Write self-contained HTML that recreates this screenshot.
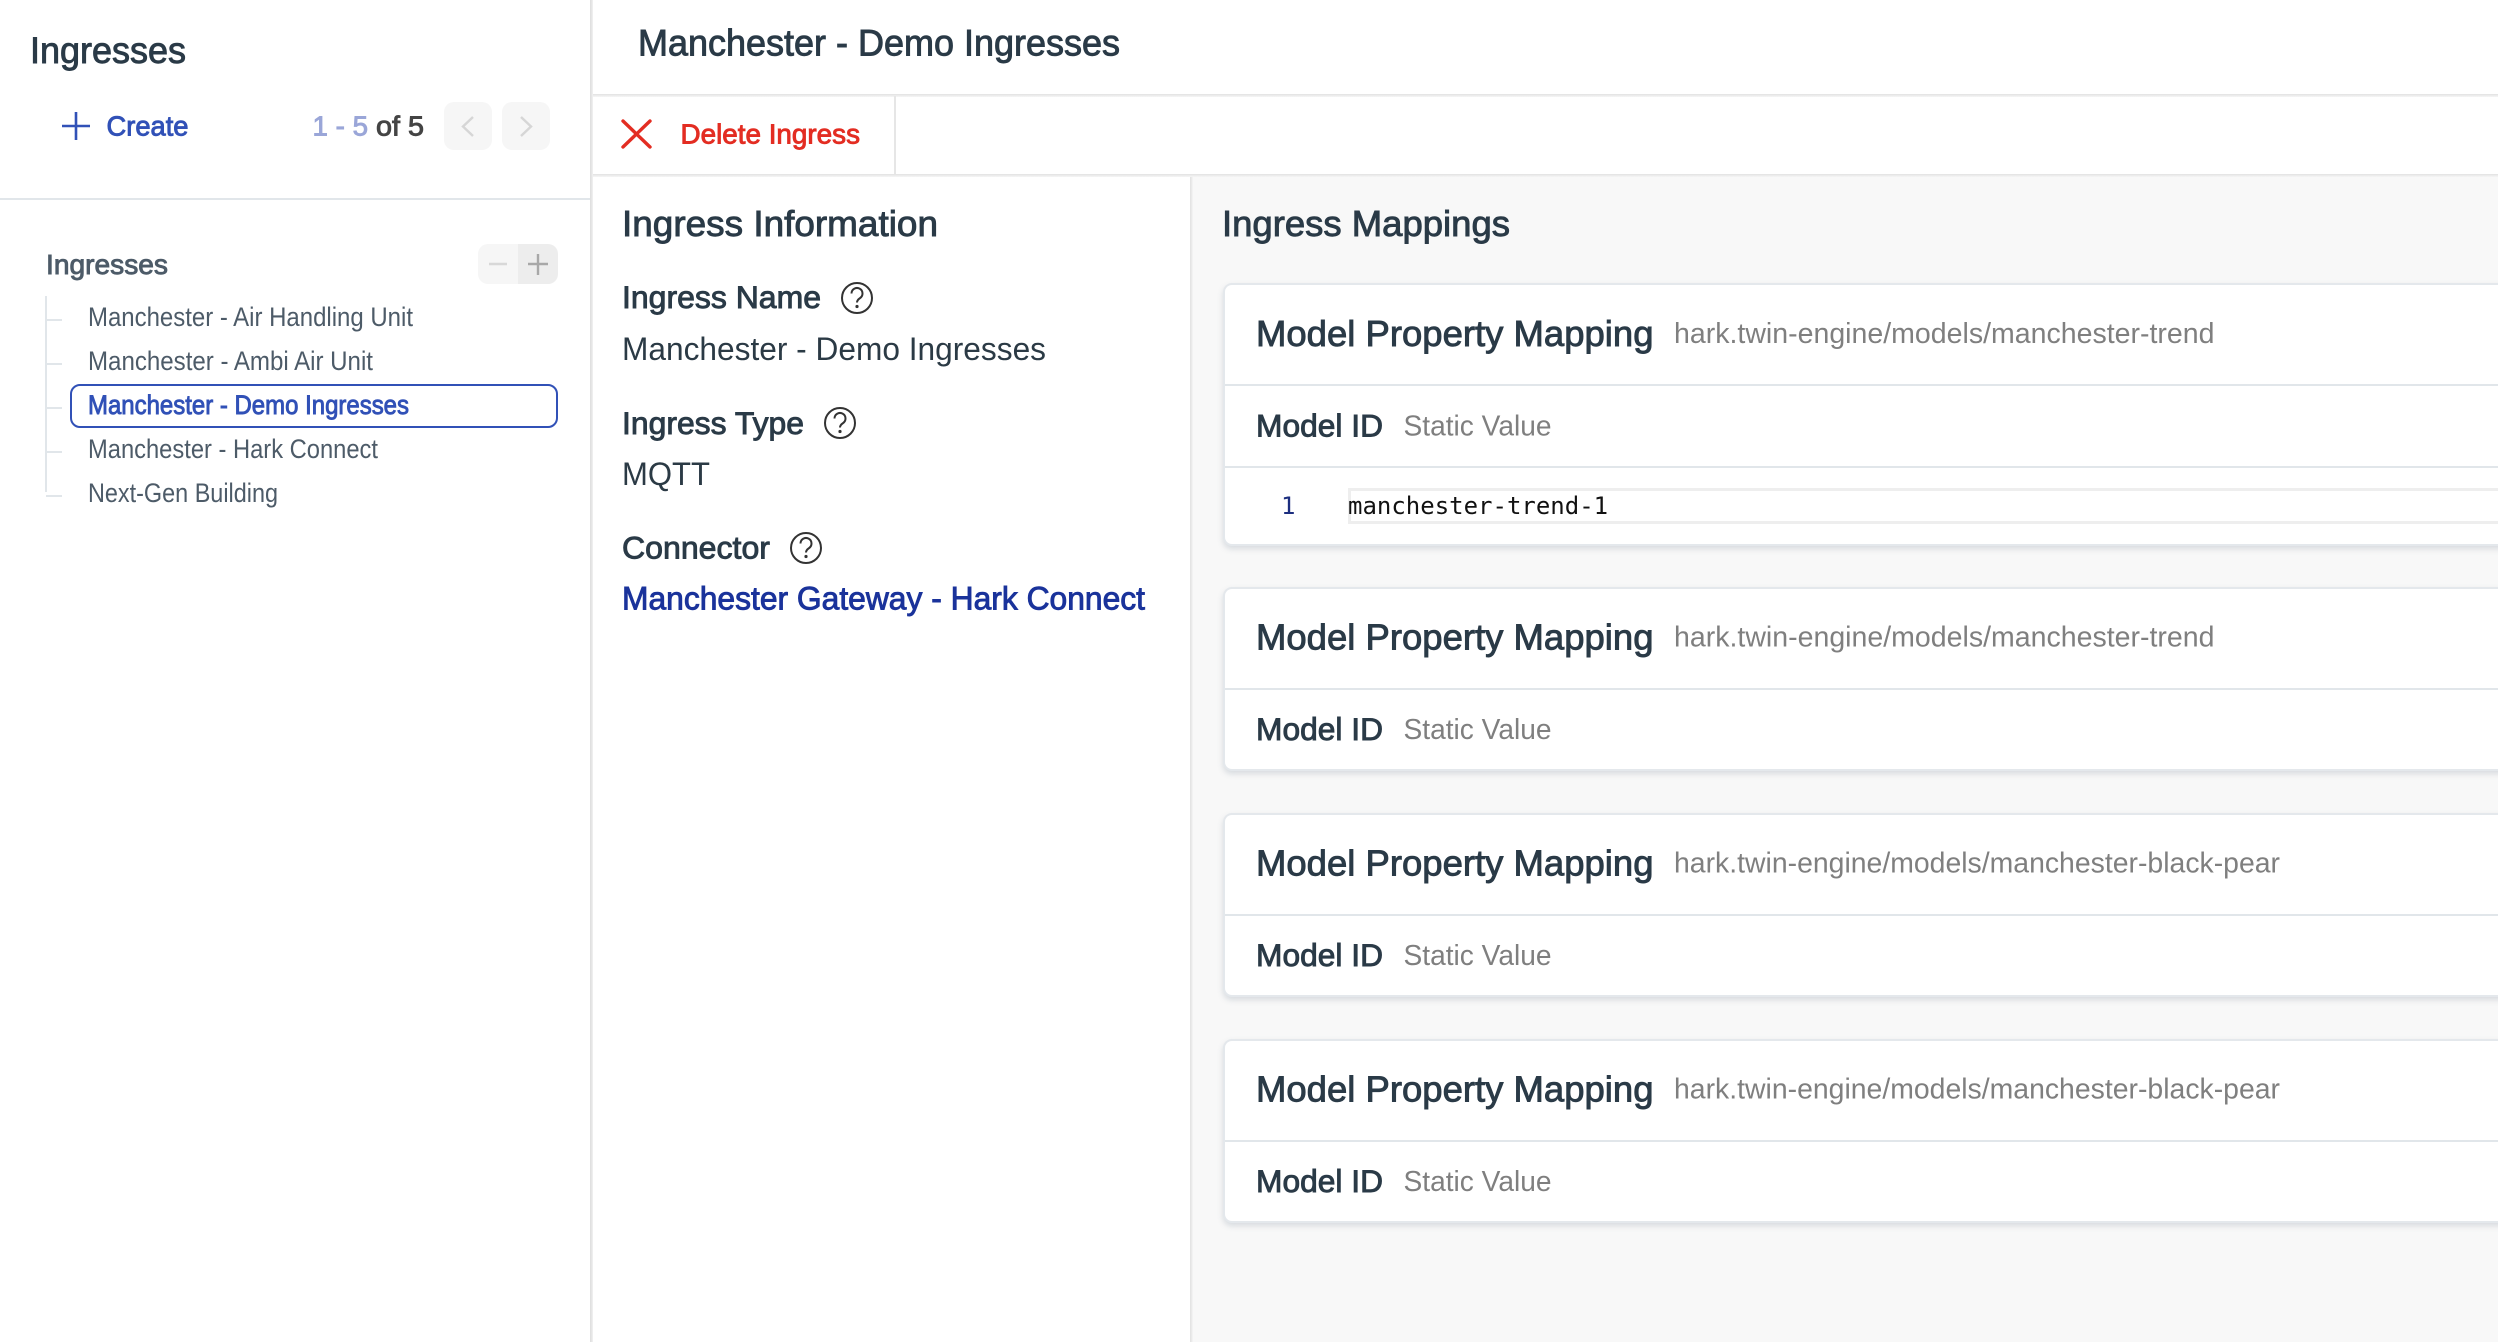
<!DOCTYPE html>
<html>
<head>
<meta charset="utf-8">
<title>Ingresses</title>
<style>
html,body{margin:0;padding:0;width:2498px;height:1342px;overflow:hidden;background:#fff}
.a{position:absolute}
.card{position:absolute;left:1223px;width:1300px;background:#fff;border:2px solid #e4e8ec;border-right:0;border-radius:9px 0 0 9px;box-shadow:0 3px 6px rgba(120,135,150,.25);box-sizing:border-box}
.hr{position:absolute;left:1225px;right:0;height:2px;background:#e1e6ea}
svg{position:absolute;left:0;top:0}
text{font-family:"Liberation Sans",Arial,sans-serif;white-space:pre}
.m{stroke-width:.9px}
.d{fill:#2a3a47;stroke:#2a3a47}
.g{fill:#4d5b68}
.p{fill:#7f7f7f;font-size:28.5px}
.mt{font-size:36.5px}
.id{font-size:31.5px}
</style>
</head>
<body>
<!-- sidebar -->
<div class="a" style="left:0;top:0;width:590px;height:1342px;background:#fff"></div>
<div class="a" style="left:590px;top:0;width:3px;height:1342px;background:linear-gradient(90deg,#dcdcdc,#f1f1f1)"></div>
<div class="a" style="left:0;top:198px;width:590px;height:2px;background:#e1e6ea"></div>
<!-- header dividers -->
<div class="a" style="left:593px;top:94px;right:0;height:3px;background:linear-gradient(#e2e2e2,#f6f6f6)"></div>
<div class="a" style="left:593px;top:174px;right:0;height:3px;background:linear-gradient(#e2e2e2,#f6f6f6)"></div>
<div class="a" style="left:894px;top:96px;width:2px;height:78px;background:#e6e6e6"></div>
<!-- right panel -->
<div class="a" style="left:1190px;top:177px;right:0;bottom:0;background:#f8f8f8"></div>
<div class="a" style="left:1190px;top:177px;width:3px;bottom:0;background:linear-gradient(90deg,#e0e0e0,#f5f5f5)"></div>
<!-- pager buttons -->
<div class="a" style="left:444px;top:102px;width:48px;height:48px;border-radius:10px;background:#f6f6f6"></div>
<div class="a" style="left:502px;top:102px;width:48px;height:48px;border-radius:10px;background:#f6f6f6"></div>
<!-- expand / collapse -->
<div class="a" style="left:478px;top:244px;width:40px;height:40px;border-radius:10px 0 0 10px;background:#f6f6f6"></div>
<div class="a" style="left:518px;top:244px;width:40px;height:40px;border-radius:0 10px 10px 0;background:#ededed"></div>
<!-- selected tree item -->
<div class="a" style="left:70px;top:384px;width:488px;height:43.5px;box-sizing:border-box;border:2.5px solid #3151b7;border-radius:10px;background:#fff"></div>
<!-- cards -->
<div class="card" style="top:283px;height:263px"></div>
<div class="hr" style="top:384px"></div>
<div class="hr" style="top:466px"></div>
<div class="a" style="left:1348px;top:488px;right:0;height:36px;box-sizing:border-box;border:3.5px solid #eeeeee;border-right:0"></div>
<div class="card" style="top:587px;height:184px"></div>
<div class="hr" style="top:688px"></div>
<div class="card" style="top:813px;height:184px"></div>
<div class="hr" style="top:914px"></div>
<div class="card" style="top:1039px;height:184px"></div>
<div class="hr" style="top:1140px"></div>

<svg width="2498" height="1342" viewBox="0 0 2498 1342" xmlns="http://www.w3.org/2000/svg">
  <!-- sidebar header -->
  <text x="30" y="63" font-size="37" class="m d" textLength="156" lengthAdjust="spacingAndGlyphs">Ingresses</text>
  <path d="M62 126H90M76 112V140" stroke="#3151b7" stroke-width="2.6" fill="none"/>
  <text x="106.5" y="135.5" font-size="28" fill="#3151b7" stroke="#3151b7" class="m" textLength="82" lengthAdjust="spacingAndGlyphs">Create</text>
  <text x="312.5" y="135.5" font-size="28" fill="#9aa6d8" stroke="#9aa6d8" class="m" textLength="55.5" lengthAdjust="spacingAndGlyphs">1 - 5</text>
  <text x="376" y="135.5" font-size="28" fill="#444" stroke="#444" class="m" textLength="48" lengthAdjust="spacingAndGlyphs">of 5</text>
  <path d="M473 117L463 126.5L473 136" stroke="#d6d6d6" stroke-width="2.4" fill="none"/>
  <path d="M521 117L531 126.5L521 136" stroke="#d6d6d6" stroke-width="2.4" fill="none"/>

  <!-- tree -->
  <text x="46" y="274" font-size="28" class="m g" stroke="#4d5b68" textLength="122" lengthAdjust="spacingAndGlyphs">Ingresses</text>
  <path d="M489 264H507" stroke="#d8d8d8" stroke-width="2.4"/>
  <path d="M528 264H548M538 254V275" stroke="#a8a8a8" stroke-width="2.4"/>
  <path d="M46 296V492M46 320H62M46 364H62M46 408H62M46 452H62M46 496H62" stroke="#e1e6ea" stroke-width="2" fill="none"/>
  <text x="88" y="326" font-size="26.5" class="g" textLength="325" lengthAdjust="spacingAndGlyphs">Manchester - Air Handling Unit</text>
  <text x="88" y="370" font-size="26.5" class="g" textLength="285" lengthAdjust="spacingAndGlyphs">Manchester - Ambi Air Unit</text>
  <text x="88" y="414" font-size="26.5" fill="#3151b7" stroke="#3151b7" class="m" textLength="321" lengthAdjust="spacingAndGlyphs">Manchester - Demo Ingresses</text>
  <text x="88" y="458" font-size="26.5" class="g" textLength="290" lengthAdjust="spacingAndGlyphs">Manchester - Hark Connect</text>
  <text x="88" y="502" font-size="26.5" class="g" textLength="190" lengthAdjust="spacingAndGlyphs">Next-Gen Building</text>

  <!-- main header -->
  <text x="638" y="55.5" font-size="37" class="m d" textLength="482" lengthAdjust="spacingAndGlyphs">Manchester - Demo Ingresses</text>
  <path d="M623 121L650 147M650 121L623 147" stroke="#e32d22" stroke-width="3.4" stroke-linecap="round" fill="none"/>
  <text x="680.5" y="143.3" font-size="28" fill="#e32d22" stroke="#e32d22" class="m" textLength="179.5" lengthAdjust="spacingAndGlyphs">Delete Ingress</text>

  <!-- ingress info -->
  <text x="622" y="236" font-size="36" class="m d" textLength="316" lengthAdjust="spacingAndGlyphs">Ingress Information</text>
  <text x="622" y="308" font-size="31.5" class="m d" textLength="199" lengthAdjust="spacingAndGlyphs">Ingress Name</text>
  <g fill="none" stroke="#333" stroke-width="2">
    <circle cx="857" cy="298" r="15"/>
    <path d="M851.5 293.5a5.5 5.5 0 1 1 8.5 4.6c-2 1.3-3 2.4-3 4.4" stroke-width="2"/>
  </g>
  <circle cx="857" cy="306.5" r="1.6" fill="#333"/>
  <text x="622" y="360" font-size="32" fill="#2b3a45" textLength="424" lengthAdjust="spacingAndGlyphs">Manchester - Demo Ingresses</text>

  <text x="622" y="434" font-size="31.5" class="m d" textLength="182" lengthAdjust="spacingAndGlyphs">Ingress Type</text>
  <g fill="none" stroke="#333" stroke-width="2">
    <circle cx="840" cy="423" r="15"/>
    <path d="M834.5 418.5a5.5 5.5 0 1 1 8.5 4.6c-2 1.3-3 2.4-3 4.4"/>
  </g>
  <circle cx="840" cy="431.5" r="1.6" fill="#333"/>
  <text x="622" y="485" font-size="32" fill="#2b3a45" textLength="88" lengthAdjust="spacingAndGlyphs">MQTT</text>

  <text x="622" y="558.3" font-size="31.5" class="m d" textLength="148" lengthAdjust="spacingAndGlyphs">Connector</text>
  <g fill="none" stroke="#333" stroke-width="2">
    <circle cx="806" cy="548" r="15"/>
    <path d="M800.5 543.5a5.5 5.5 0 1 1 8.5 4.6c-2 1.3-3 2.4-3 4.4"/>
  </g>
  <circle cx="806" cy="556.5" r="1.6" fill="#333"/>
  <text x="622" y="609.3" font-size="32" fill="#1a339b" stroke="#1a339b" class="m" textLength="523" lengthAdjust="spacingAndGlyphs">Manchester Gateway - Hark Connect</text>

  <!-- mappings -->
  <text x="1222" y="236" font-size="36" class="m d" textLength="288" lengthAdjust="spacingAndGlyphs">Ingress Mappings</text>

  <text x="1256" y="346" class="mt m d" textLength="397.5" lengthAdjust="spacingAndGlyphs">Model Property Mapping</text>
  <text x="1674" y="343" class="p" textLength="540.5" lengthAdjust="spacingAndGlyphs">hark.twin-engine/models/manchester-trend</text>
  <text x="1256" y="436.5" class="id m d" textLength="127" lengthAdjust="spacingAndGlyphs">Model ID</text>
  <text x="1403.5" y="435.5" class="p" textLength="148" lengthAdjust="spacingAndGlyphs">Static Value</text>
  <text x="1281" y="514" font-size="24" fill="#1c2e7f" style="font-family:'DejaVu Sans Mono',monospace">1</text>
  <text x="1348" y="514" font-size="24" fill="#111" style="font-family:'DejaVu Sans Mono',monospace">manchester-trend-1</text>

  <text x="1256" y="649.5" class="mt m d" textLength="397.5" lengthAdjust="spacingAndGlyphs">Model Property Mapping</text>
  <text x="1674" y="646.5" class="p" textLength="540.5" lengthAdjust="spacingAndGlyphs">hark.twin-engine/models/manchester-trend</text>
  <text x="1256" y="740" class="id m d" textLength="127" lengthAdjust="spacingAndGlyphs">Model ID</text>
  <text x="1403.5" y="739" class="p" textLength="148" lengthAdjust="spacingAndGlyphs">Static Value</text>

  <text x="1256" y="875.5" class="mt m d" textLength="397.5" lengthAdjust="spacingAndGlyphs">Model Property Mapping</text>
  <text x="1674" y="872.5" class="p" textLength="606" lengthAdjust="spacingAndGlyphs">hark.twin-engine/models/manchester-black-pear</text>
  <text x="1256" y="966" class="id m d" textLength="127" lengthAdjust="spacingAndGlyphs">Model ID</text>
  <text x="1403.5" y="965" class="p" textLength="148" lengthAdjust="spacingAndGlyphs">Static Value</text>

  <text x="1256" y="1101.5" class="mt m d" textLength="397.5" lengthAdjust="spacingAndGlyphs">Model Property Mapping</text>
  <text x="1674" y="1098.5" class="p" textLength="606" lengthAdjust="spacingAndGlyphs">hark.twin-engine/models/manchester-black-pear</text>
  <text x="1256" y="1192" class="id m d" textLength="127" lengthAdjust="spacingAndGlyphs">Model ID</text>
  <text x="1403.5" y="1191" class="p" textLength="148" lengthAdjust="spacingAndGlyphs">Static Value</text>
</svg>
</body>
</html>
